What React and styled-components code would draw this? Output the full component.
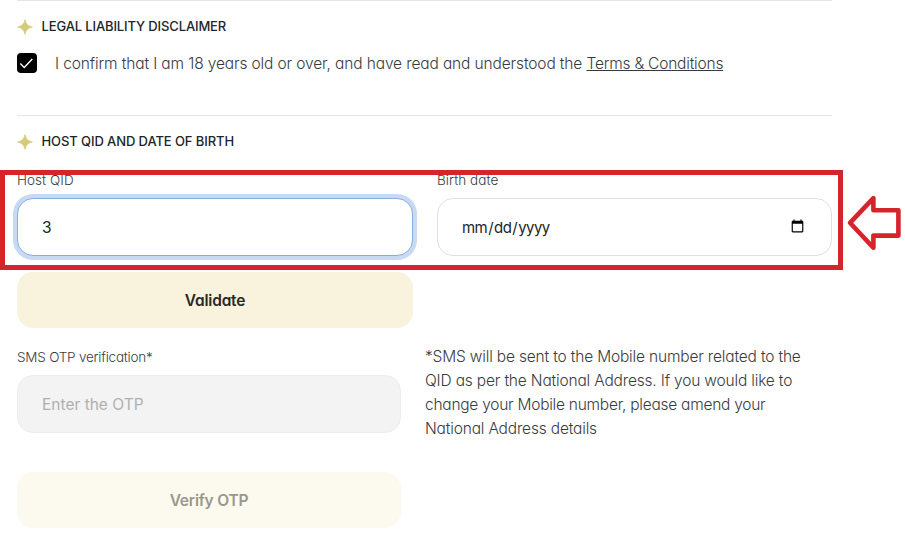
import React, { useState } from "react";
import styled, { createGlobalStyle } from "styled-components";

export default function HostForm() {

    const [accepted, setAccepted] = useState(true);
    const [qid, setQid] = useState("3");
    const [birthDate, setBirthDate] = useState("");

    return (
    <>
        <GlobalStyle/>
        <Page>
            <Section $height="115px">
                <Title><Star/> Legal liability disclaimer</Title>
                <Confirm>
                    <Checkbox type="button" role="checkbox" aria-checked={accepted} onClick={()=>setAccepted(!accepted)}>
                        {accepted && <Check/>}
                    </Checkbox>
                    <p>
                        I confirm that I am 18 years old or over, and have read and understood the{" "}
                        <a href="#terms">Terms &amp; Conditions</a>
                    </p>
                </Confirm>
            </Section>
            <Section>
                <Title $spacing="-0.09px"><Star/> Host QID and date of birth</Title>
                <HostRow>
                    <Field>
                        <Label htmlFor="qid">Host QID</Label>
                        <Input id="qid" $active value={qid} onChange={(e)=>setQid(e.target.value)}/>
                    </Field>
                    <Field>
                        <Label htmlFor="birth">Birth date</Label>
                        <Input id="birth" type="date" $spacing="-0.55px" value={birthDate} onChange={(e)=>setBirthDate(e.target.value)}/>
                    </Field>
                    <Button type="button">Validate</Button>
                    <Highlight/>
                    <Arrow/>
                </HostRow>
                <OtpRow>
                    <Field>
                        <Label htmlFor="otp" $spacing="-0.22px">SMS OTP verification*</Label>
                        <Input id="otp" placeholder="Enter the OTP" disabled/>
                    </Field>
                    <Note>
                        *SMS will be sent to the Mobile number related to the<br/>
                        QID as per the National Address. If you would like to<br/>
                        <Tight>change your Mobile number, please amend your</Tight><br/>
                        National Address details
                    </Note>
                    <Button type="button" disabled>Verify OTP</Button>
                </OtpRow>
            </Section>
        </Page>
    </>
    )
}

function Star() {
    return (
        <StarIcon viewBox="0 0 16 16">
            <path d="M8 0.7C9 5 11 7 15.3 8C11 9 9 11 8 15.3C7 11 5 9 0.7 8C5 7 7 5 8 0.7Z" fill="#d3cc7c" stroke="#d3cc7c" strokeWidth="0.8" strokeLinejoin="round"/>
        </StarIcon>
    )
}

function Check() {
    return (
        <svg width="20" height="20" viewBox="0 0 20 20" fill="none">
            <path d="M3.3 10.6L7.2 14.4L15.3 6" stroke="#fff" strokeWidth="1.4"/>
        </svg>
    )
}

function Arrow() {
    return (
        <ArrowIcon viewBox="0 0 58 60">
            <path d="M5 29.8L28.4 5.2V17.3H53.4V42.6H28.4V54.8Z" fill="#fff" stroke="#d6242c" strokeWidth="4.6" strokeLinejoin="round"/>
        </ArrowIcon>
    )
}

const GlobalStyle = createGlobalStyle`
*{
    box-sizing:border-box;
    margin:0;
}
body{
    background-color:#fff;
    color:#383b3e;
    font-family:Inter, "Liberation Sans", sans-serif;
    font-feature-settings:"cv11";
}
`;

const Page = styled.main`
width:832px;
height:541px;
padding-left:17px;
`;

const Section = styled.section`
height:${(props)=>props.$height || "auto"};
border-top:1px solid #e6e6e6;
`;

const Title = styled.h2`
display:flex;
align-items:center;
gap:8.5px;
height:50px;
margin-bottom:1px;
color:#212529;
font-size:13px;
font-weight:500;
letter-spacing:${(props)=>props.$spacing || "-0.13px"};
text-transform:uppercase;
`;

const StarIcon = styled.svg`
width:16px;
height:16px;
flex:none;
position:relative;
top:0.5px;
`;

const Confirm = styled.div`
display:flex;
align-items:center;
gap:18px;
height:22px;
p{
    font-size:15.5px;
    font-weight:300;
    letter-spacing:-0.125px;
    white-space:nowrap;
}
a{
    color:inherit;
    letter-spacing:-0.2px;
    text-decoration:underline;
    text-decoration-thickness:1px;
    text-underline-offset:1px;
}
`;

const Checkbox = styled.button`
width:20px;
height:20px;
padding:0;
border:none;
border-radius:4px;
background-color:#000;
cursor:pointer;
svg{
    display:block;
}
`;

const HostRow = styled.div`
position:relative;
display:grid;
grid-template-columns:396px 395px;
column-gap:24px;
row-gap:16px;
padding-top:5px;
`;

const OtpRow = styled.div`
display:grid;
grid-template-columns:384px 1fr;
column-gap:24px;
row-gap:39px;
padding-top:21px;
`;

const Field = styled.div`
display:flex;
flex-direction:column;
`;

const Label = styled.label`
height:26px;
font-size:13.5px;
font-weight:300;
line-height:17px;
letter-spacing:${(props)=>props.$spacing || "0.05px"};
`;

const Input = styled.input`
width:100%;
height:58px;
padding:0 24px;
border:1px solid ${(props)=>props.$active ? "#86aee0" : "#dee0e4"};
border-radius:16px;
outline:none;
background-color:#fff;
box-shadow:${(props)=>props.$active ? "0 0 0 4px #c8daf3" : "none"};
color:#212529;
font-family:inherit;
font-feature-settings:inherit;
font-size:15.5px;
letter-spacing:${(props)=>props.$spacing || "0"};
&::-webkit-datetime-edit{
    margin-left:-1px;
}
&::-webkit-datetime-edit-fields-wrapper{
    font-size:15px;
}
&:disabled{
    border-color:#ededed;
    background-color:#f3f3f3;
}
&::placeholder{
    color:#b0b0b0;
}
`;

const Button = styled.button`
height:56px;
border:none;
border-radius:16px;
background-color:#f9f2dd;
color:#2b2925;
font-family:inherit;
font-feature-settings:inherit;
font-size:15.5px;
font-weight:600;
letter-spacing:-0.2px;
cursor:pointer;
&:disabled{
    background-color:#fcfaee;
    color:#99978f;
    cursor:default;
}
`;

const Note = styled.p`
height:84px;
margin-top:-4px;
font-size:15.5px;
font-weight:300;
line-height:24px;
letter-spacing:-0.17px;
white-space:nowrap;
`;

const Tight = styled.span`
letter-spacing:-0.25px;
`;

// red frame drawn over the host fields
const Highlight = styled.div`
position:absolute;
top:3px;
left:-17px;
width:843px;
height:100px;
border:5px solid #d6242c;
pointer-events:none;
`;

const ArrowIcon = styled.svg`
position:absolute;
top:26px;
left:828px;
width:58px;
height:60px;
`;
